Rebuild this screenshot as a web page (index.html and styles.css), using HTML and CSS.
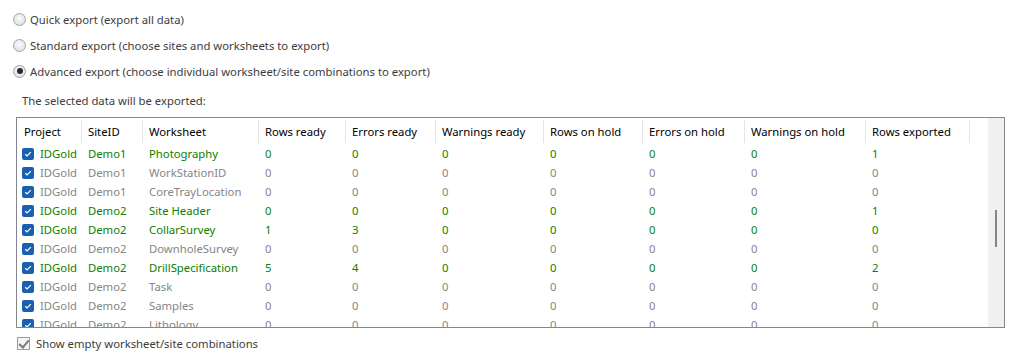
FILE: index.html
```html
<!DOCTYPE html>
<html>
<head>
    <title>Export</title>
    <meta charset="UTF-8">
    <link rel="stylesheet" href="styles.css">
</head>
<body>
    <div class="page">
        <label class="radio-row"><span class="radio"></span>Quick export (export all data)</label>
        <label class="radio-row"><span class="radio"></span>Standard export (choose sites and worksheets to export)</label>
        <label class="radio-row"><span class="radio checked"></span>Advanced export (choose individual worksheet/site combinations to export)</label>
        <div class="caption">The selected data will be exported:</div>

        <div class="grid-box">
            <div class="grid-scroll">
                <table class="grid">
                    <colgroup>
                        <col style="width:65px"><col style="width:61px"><col style="width:116px"><col style="width:87px">
                        <col style="width:90px"><col style="width:108px"><col style="width:99px"><col style="width:102px">
                        <col style="width:121px"><col style="width:104px"><col>
                    </colgroup>
                    <thead>
                        <tr>
                            <th>Project</th><th>SiteID</th><th>Worksheet</th><th>Rows ready</th><th>Errors ready</th>
                            <th>Warnings ready</th><th>Rows on hold</th><th>Errors on hold</th><th>Warnings on hold</th>
                            <th>Rows exported</th><th class="filler"></th>
                        </tr>
                    </thead>
                    <tbody id="rows"></tbody>
                </table>
            </div>
            <div class="vscroll"><div class="thumb"></div></div>
        </div>

        <label class="check-row"><span class="check-gray"></span>Show empty worksheet/site combinations</label>
    </div>

    <script>
        const data = [
            ['Demo1', 'Photography', 0, 0, 0, 0, 0, 0, 1, true],
            ['Demo1', 'WorkStationID', 0, 0, 0, 0, 0, 0, 0, false],
            ['Demo1', 'CoreTrayLocation', 0, 0, 0, 0, 0, 0, 0, false],
            ['Demo2', 'Site Header', 0, 0, 0, 0, 0, 0, 1, true],
            ['Demo2', 'CollarSurvey', 1, 3, 0, 0, 0, 0, 0, true],
            ['Demo2', 'DownholeSurvey', 0, 0, 0, 0, 0, 0, 0, false],
            ['Demo2', 'DrillSpecification', 5, 4, 0, 0, 0, 0, 2, true],
            ['Demo2', 'Task', 0, 0, 0, 0, 0, 0, 0, false],
            ['Demo2', 'Samples', 0, 0, 0, 0, 0, 0, 0, false],
            ['Demo2', 'Lithology', 0, 0, 0, 0, 0, 0, 0, false]
        ];

        const tick = '<svg width="12" height="12" viewBox="0 0 12 12"><rect x="0" y="0" width="12" height="12" rx="2" fill="#1a5fb0"/><path d="M3.2 6.2 L5.1 8 L8.8 4.2" fill="none" stroke="#fff" stroke-width="1.2"/></svg>';

        const body = document.getElementById('rows');
        data.forEach(row => {
            const tr = document.createElement('tr');
            tr.className = row[9] ? 'active' : 'empty';
            let html = `<td><span class="cb">${tick}</span>IDGold</td>`;
            for (let i = 0; i < 9; i++) html += `<td>${row[i]}</td>`;
            html += '<td></td>';
            tr.innerHTML = html;
            body.appendChild(tr);
        });
    </script>
</body>
</html>
```

FILE: styles.css
```css
* {
    box-sizing: border-box;
    margin: 0;
    padding: 0;
}

body {
    font-family: 'Noto Sans', 'Open Sans', sans-serif;
    font-size: 11.3px;
    background: #fff;
    color: #000;
}

.page {
    padding: 6px 14px 0 13px;
    display: flex;
    flex-direction: column;
}

.radio-row {
    height: 26px;
    display: flex;
    align-items: center;
    gap: 4px;
    color: #3c3c3c;
}

.radio {
    width: 13px;
    height: 13px;
    border-radius: 50%;
    border: 1px solid #a3a3a3;
    background: radial-gradient(circle at 50% 40%, #fafafa 0%, #e4e4e4 70%, #d6d6d6 100%);
    display: flex;
    align-items: center;
    justify-content: center;
}

.radio.checked::after {
    content: '';
    width: 6px;
    height: 6px;
    border-radius: 50%;
    background: #2a2a2a;
}

.caption {
    height: 30px;
    padding-top: 4px;
    line-height: 26px;
    padding-left: 9px;
    color: #3c3c3c;
}

.grid-box {
    margin: 3px 1px 0 3px;
    height: 211px;
    border: 1px solid #828790;
    display: flex;
    overflow: hidden;
}

.grid-scroll {
    flex: 1;
    overflow: hidden;
}

.grid {
    border-collapse: collapse;
    table-layout: fixed;
    width: 100%;
}

.grid th {
    height: 26px;
    text-align: left;
    font-weight: normal;
    padding-left: 6px;
    position: relative;
    white-space: nowrap;
}

.grid th::after {
    content: '';
    position: absolute;
    right: 0;
    top: 2px;
    bottom: 1px;
    width: 1px;
    background: #e5e5e5;
}

.grid th:first-child {
    padding-left: 7px;
}

.grid th.filler::after {
    display: none;
}

.grid td {
    height: 19px;
    padding-left: 6px;
    white-space: nowrap;
}

.grid td:first-child {
    padding-left: 5px;
}

.cb {
    display: inline-block;
    width: 12px;
    height: 12px;
    margin-right: 6px;
    vertical-align: -2px;
}

.cb svg {
    display: block;
}

tr.active td {
    color: #0a8000;
}

tr.empty td {
    color: #858585;
}

.vscroll {
    width: 16px;
    background: #f0f0f0;
    display: flex;
    justify-content: center;
    padding-top: 92px;
}

.thumb {
    width: 2px;
    height: 37px;
    background: #858585;
}

.check-row {
    height: 30px;
    display: flex;
    align-items: center;
    gap: 6px;
    padding-left: 4px;
    color: #3c3c3c;
}

.check-gray {
    width: 13px;
    height: 13px;
    border: 1px solid #9c9c9c;
    background: #f4f4f4;
    position: relative;
}

.check-gray::after {
    content: '';
    position: absolute;
    left: 3px;
    top: 0px;
    width: 4px;
    height: 8px;
    border: solid #7a7a7a;
    border-width: 0 2px 2px 0;
    transform: rotate(40deg);
}
```
